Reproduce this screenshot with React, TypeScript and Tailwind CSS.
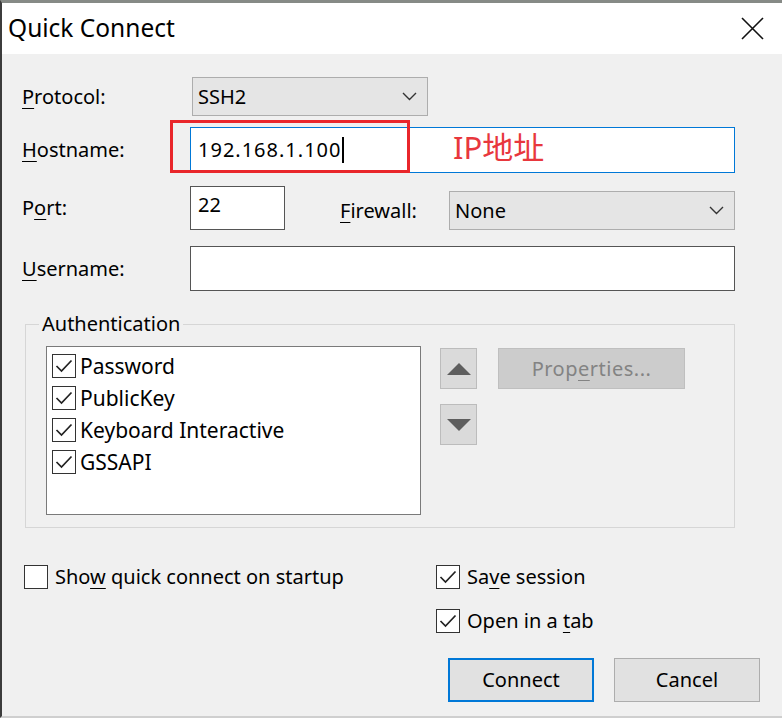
import React from "react";

const font = { fontFamily: '"Noto Sans", "Noto Sans CJK SC", sans-serif' };

function Chevron() {
  return (
    <svg width="15" height="9" viewBox="0 0 15 9" className="shrink-0">
      <polyline points="1,1 7.5,7.5 14,1" fill="none" stroke="#333" strokeWidth="1.4" />
    </svg>
  );
}

function Check({ on }: { on: boolean }) {
  return (
    <span className="flex h-[24px] w-[24px] shrink-0 items-center justify-center border border-[#333] bg-white">
      {on && (
        <svg width="18" height="14" viewBox="0 0 18 14">
          <polyline points="1.5,7 6.5,12 16.5,1.5" fill="none" stroke="#222" strokeWidth="1.7" />
        </svg>
      )}
    </span>
  );
}

function Label({ pre, key_, post, w }: { pre?: string; key_: string; post: string; w: string }) {
  return (
    <span className={`${w} shrink-0 text-[20px] leading-none text-black`}>
      {pre}
      <span className="underline underline-offset-[4px] decoration-1">{key_}</span>
      {post}
    </span>
  );
}

function Select({ value, className }: { value: string; className: string }) {
  return (
    <div className={`flex h-[39px] items-center justify-between border border-[#adadad] bg-[#e5e5e5] pl-[5px] pr-[10px] ${className}`}>
      <span className="text-[20px] text-black">{value}</span>
      <Chevron />
    </div>
  );
}

function Triangle({ up }: { up: boolean }) {
  return (
    <button className="flex h-[41px] w-[37px] items-center justify-center border border-[#bcbcbc] bg-[#dadada]">
      <svg width="24" height="12" viewBox="0 0 24 12">
        <polygon points={up ? "12,0 24,12 0,12" : "0,0 24,0 12,12"} fill="#5e5e5e" />
      </svg>
    </button>
  );
}

const methods = ["Password", "PublicKey", "Keyboard Interactive", "GSSAPI"];

export default function App() {
  return (
    <div className="h-[718px] w-[782px] overflow-hidden bg-[#f0f0f0]" style={font}>
      <div className="h-[718px] border-l-2 border-t-[3px] border-b-2 border-l-[#3c3c3c] border-t-[#868a86] border-b-[#cfcfcf]">
        {/* title bar */}
        <div className="flex h-[51px] items-center justify-between bg-white pl-[6px] pr-[18px]">
          <span className="text-[24.5px] text-black">Quick Connect</span>
          <svg width="23" height="23" viewBox="0 0 23 23">
            <path d="M1 1L22 22M22 1L1 22" stroke="#111" strokeWidth="1.6" />
          </svg>
        </div>

        <div className="pl-[20px]">
          {/* protocol */}
          <div className="mt-[23px] flex h-[39px] items-center">
            <Label key_="P" post="rotocol:" w="w-[170px]" />
            <Select value="SSH2" className="w-[236px]" />
          </div>

          {/* hostname */}
          <div className="relative mt-[11px] flex h-[46px] items-center">
            <Label key_="H" post="ostname:" w="w-[168px]" />
            <div className="flex h-[46px] w-[545px] items-center border border-[#0078d7] bg-white pl-[7px]">
              <span className="text-[20px] tracking-[1px] text-black">192.168.1.100</span>
              <span className="ml-[1px] h-[26px] w-[2px] bg-black" />
            </div>
            <div className="absolute left-[148px] top-[-7px] h-[53px] w-[240px] border-[3px] border-[#e9262b]" />
            <span className="absolute left-[431px] top-[0px] text-[31px] leading-[40px] text-[#e8373d]">IP地址</span>
          </div>

          {/* port / firewall */}
          <div className="mt-[13px] flex h-[44px] items-end">
            <span className="self-center">
              <Label pre="P" key_="o" post="rt:" w="w-[168px] block" />
            </span>
            <div className="flex h-[44px] w-[95px] items-start border border-[#555] bg-white pl-[7px] pt-[5px]">
              <span className="text-[20px] leading-[26px] text-black">22</span>
            </div>
            <span className="ml-[55px] self-center pt-[5px]">
              <Label key_="F" post="irewall:" w="w-[109px] block" />
            </span>
            <Select value="None" className="w-[286px]" />
          </div>

          {/* username */}
          <div className="mt-[16px] flex h-[45px] items-center">
            <Label key_="U" post="sername:" w="w-[168px]" />
            <div className="h-[45px] w-[545px] border border-[#555] bg-white" />
          </div>

          {/* authentication */}
          <fieldset className="ml-[3px] mt-[21px] w-[710px] border border-[#d6d6d6] pb-[12px] pl-[20px]">
            <legend className="-ml-[7px] px-[3px] text-[20px] leading-[24px] text-black">Authentication</legend>
            <div className="mt-[10px] flex items-start">
              <div className="flex h-[169px] w-[375px] flex-col border border-[#7a7a7a] bg-white pl-[5px] pt-[3px]">
                {methods.map((m) => (
                  <div key={m} className="flex h-[32px] items-center gap-[4px]">
                    <Check on />
                    <span className="text-[21px] leading-none text-black">{m}</span>
                  </div>
                ))}
              </div>
              <div className="ml-[19px] flex flex-col gap-[15px] pt-[2px]">
                <Triangle up />
                <Triangle up={false} />
              </div>
              <button className="ml-[21px] mt-[2px] h-[41px] w-[187px] border border-[#bfbfbf] bg-[#cccccc] text-[20px] tracking-[0.5px] text-[#838383]">
                Prop<span className="underline underline-offset-[4px] decoration-1">e</span>rties...
              </button>
            </div>
          </fieldset>

          {/* options */}
          <div className="mt-[37px] flex">
            <div className="flex w-[414px] items-center gap-[7px] self-start pl-[2px]">
              <Check on={false} />
              <Label pre="Sho" key_="w" post=" quick connect on startup" w="" />
            </div>
            <div className="flex flex-col gap-[20px]">
              <div className="flex items-center gap-[7px]">
                <Check on />
                <Label pre="Sa" key_="v" post="e session" w="" />
              </div>
              <div className="flex items-center gap-[7px]">
                <Check on />
                <Label pre="Open in a " key_="t" post="ab" w="" />
              </div>
            </div>
          </div>

          {/* buttons */}
          <div className="mt-[25px] flex gap-[20px] pl-[426px]">
            <button className="h-[44px] w-[146px] border-2 border-[#0078d7] bg-[#e1e1e1] text-[20px] text-black">Connect</button>
            <button className="h-[44px] w-[146px] border border-[#adadad] bg-[#e1e1e1] text-[20px] text-black">Cancel</button>
          </div>
        </div>
      </div>
    </div>
  );
}
